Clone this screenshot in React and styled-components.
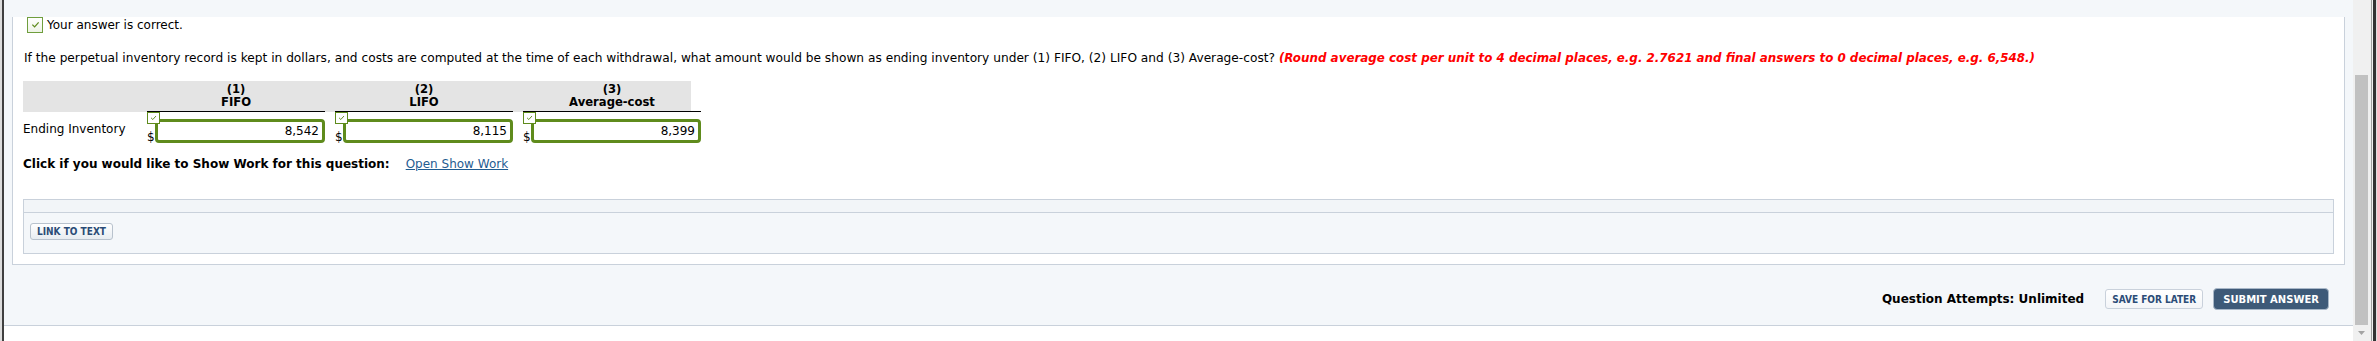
import React from "react";
import styled, { createGlobalStyle } from "styled-components";

const FONT = `"DejaVu Sans", Verdana, sans-serif`;
const CONDENSED = `"DejaVu Sans Condensed", "DejaVu Sans", sans-serif`;
const GREEN = "#5f8b1c";
const LINE = "#c9d1db";

const GlobalStyle = createGlobalStyle`
  html, body { margin: 0; padding: 0; background: #fff; }
  body { font-family: ${FONT}; color: #000; }
`;

const Window = styled.div`
  display: flex;
  width: 2377px;
  height: 341px;
  overflow: hidden;
  border-left: 2px solid #dcdcdc;
  box-sizing: border-box;
`;

const Viewport = styled.div`
  flex: 1;
  display: flex;
  flex-direction: column;
  border-left: 2px solid #3f3f3f;
  background: #fff;
`;

const Page = styled.div`
  height: 325px;
  background: #f4f7fa;
  border-bottom: 1px solid ${LINE};
  padding: 0 8px;
`;

const Panel = styled.div`
  background: #fff;
  border: 1px solid ${LINE};
  border-top: none;
  padding: 0 10px 10px;
`;

const CorrectRow = styled.div`
  display: flex;
  align-items: center;
  gap: 4px;
  margin: 17px 0 0 4px;
  height: 16px;
  font-size: 12px;
`;

const BigCheck = styled.span`
  width: 16px;
  height: 16px;
  box-sizing: border-box;
  border: 1px solid #6f9e3d;
  background: linear-gradient(#ffffff, #eef3e6);
  display: grid;
  place-items: center;
`;

const Question = styled.p`
  margin: 18px 0 0 1px;
  font-size: 12.2px;
  line-height: 15px;
`;

const Hint = styled.span`
  color: #ff0000;
  font-weight: bold;
  font-style: italic;
  font-size: 11.9px;
`;

const Grid = styled.div`
  display: grid;
  grid-template-columns: 114px repeat(3, 178px);
  column-gap: 10px;
  width: 668px;
`;

const HeaderRow = styled(Grid)`
  margin-top: 15px;
  background: #e4e4e4;
`;

const HeaderCell = styled.div`
  height: 28px;
  padding-top: 2px;
  text-align: center;
  font-weight: bold;
  font-size: 11.6px;
  line-height: 13px;
  border-bottom: 1px solid ${({ $ruled }) => ($ruled ? "#000" : "transparent")};
`;

const DataRow = styled(Grid)`
  height: 31px;
`;

const RowLabel = styled.div`
  padding-top: 10px;
  font-size: 12px;
  line-height: 15px;
`;

const AnswerCell = styled.div`
  position: relative;
  display: flex;
  align-items: flex-end;
`;

const Dollar = styled.span`
  width: 8px;
  font-size: 12px;
  line-height: 12px;
`;

const AnswerBox = styled.div`
  flex: 1;
  height: 24px;
  box-sizing: border-box;
  border: 3px solid ${GREEN};
  border-radius: 4px;
  background: #fff;
  padding-right: 3px;
  text-align: right;
  font-size: 12px;
  line-height: 18px;
`;

const Badge = styled.span`
  position: absolute;
  top: 0;
  left: 0;
  width: 13px;
  height: 12px;
  box-sizing: border-box;
  border: 1px solid ${GREEN};
  background: #fff;
  display: grid;
  place-items: center;
`;

const ClickRow = styled.div`
  display: flex;
  align-items: baseline;
  gap: 16px;
  margin-top: 14px;
  font-size: 12px;
  line-height: 15px;
`;

const Bold = styled.span`
  font-weight: bold;
`;

const Link = styled.a`
  color: #1f5c91;
  text-decoration: underline;
`;

const InnerBox = styled.div`
  margin-top: 27px;
  border: 1px solid ${LINE};
  background: #f4f7fa;
`;

const Strip = styled.div`
  height: 12px;
  border-bottom: 1px solid ${LINE};
  background: #f2f5f8;
`;

const InnerBody = styled.div`
  height: 40px;
  box-sizing: border-box;
  padding: 7px 6px;
`;

const LinkButton = styled.button`
  height: 17px;
  padding: 0 6px;
  border: 1px solid #b8c2cd;
  border-radius: 3px;
  background: linear-gradient(#ffffff, #e7ecf1);
  font-family: ${CONDENSED};
  font-size: 10px;
  font-weight: bold;
  color: #2b4c77;
`;

const BottomBar = styled.div`
  display: flex;
  justify-content: flex-end;
  align-items: center;
  height: 52px;
  padding: 8px 16px 0 0;
`;

const Attempts = styled.span`
  font-size: 12px;
  font-weight: bold;
  margin-right: 21px;
`;

const SaveButton = styled.button`
  height: 20px;
  padding: 0 6px;
  border: 1px solid ${LINE};
  border-radius: 3px;
  background: linear-gradient(#ffffff, #f3f5f8);
  font-family: ${CONDENSED};
  font-size: 10px;
  font-weight: bold;
  color: #2b4c77;
  margin-right: 10px;
`;

const SubmitButton = styled.button`
  height: 22px;
  padding: 0 9px;
  border: 1px solid #a9b8c8;
  border-radius: 4px;
  background: #3e5a78;
  font-family: ${FONT};
  font-size: 10px;
  font-weight: bold;
  color: #fff;
`;

const Scrollbar = styled.div`
  width: 16px;
  display: flex;
  flex-direction: column;
  align-items: stretch;
  background: #f0f0f0;
`;

const Thumb = styled.div`
  margin: 75px 1px 0 2px;
  height: 250px;
  background: #c1c1c1;
`;

const ArrowArea = styled.div`
  flex: 1;
  display: grid;
  place-items: center;
`;

const RightFrame = styled.div`
  width: 8px;
  background: linear-gradient(
    to right,
    #f0f0f0 0 2px,
    #a0a0a0 2px 3px,
    #f0f0f0 3px 4px,
    #333 4px 7px,
    #e0e0e0 7px
  );
`;

const Check = ({ size = 10 }) => (
  <svg width={size} height={size * 0.8} viewBox="0 0 10 8">
    <polyline points="1.5,4 4,6.5 8.5,1.5" fill="none" stroke={GREEN} strokeWidth="1.4" />
  </svg>
);

const answers = [
  { n: "(1)", name: "FIFO", value: "8,542" },
  { n: "(2)", name: "LIFO", value: "8,115" },
  { n: "(3)", name: "Average-cost", value: "8,399" },
];

export default function App() {
  return (
    <>
      <GlobalStyle />
      <Window>
        <Viewport>
          <Page>
            <Panel>
              <CorrectRow>
                <BigCheck>
                  <Check size={9} />
                </BigCheck>
                Your answer is correct.
              </CorrectRow>
              <Question>
                If the perpetual inventory record is kept in dollars, and costs are computed at the time of each
                withdrawal, what amount would be shown as ending inventory under (1) FIFO, (2) LIFO and (3)
                Average-cost? <Hint>(Round average cost per unit to 4 decimal places, e.g. 2.7621 and final answers to 0 decimal places, e.g. 6,548.)</Hint>
              </Question>
              <HeaderRow>
                <HeaderCell />
                {answers.map((a) => (
                  <HeaderCell key={a.name} $ruled>
                    {a.n}
                    <br />
                    {a.name}
                  </HeaderCell>
                ))}
              </HeaderRow>
              <DataRow>
                <RowLabel>Ending Inventory</RowLabel>
                {answers.map((a) => (
                  <AnswerCell key={a.name}>
                    <Badge>
                      <Check size={7} />
                    </Badge>
                    <Dollar>$</Dollar>
                    <AnswerBox>{a.value}</AnswerBox>
                  </AnswerCell>
                ))}
              </DataRow>
              <ClickRow>
                <Bold>Click if you would like to Show Work for this question:</Bold>
                <Link href="#">Open Show Work</Link>
              </ClickRow>
              <InnerBox>
                <Strip />
                <InnerBody>
                  <LinkButton>LINK TO TEXT</LinkButton>
                </InnerBody>
              </InnerBox>
            </Panel>
            <BottomBar>
              <Attempts>Question Attempts: Unlimited</Attempts>
              <SaveButton>SAVE FOR LATER</SaveButton>
              <SubmitButton>SUBMIT ANSWER</SubmitButton>
            </BottomBar>
          </Page>
        </Viewport>
        <Scrollbar>
          <Thumb />
          <ArrowArea>
            <svg width="7" height="4" viewBox="0 0 7 4">
              <polygon points="0,0 7,0 3.5,4" fill="#a3a3a3" />
            </svg>
          </ArrowArea>
        </Scrollbar>
        <RightFrame />
      </Window>
    </>
  );
}
